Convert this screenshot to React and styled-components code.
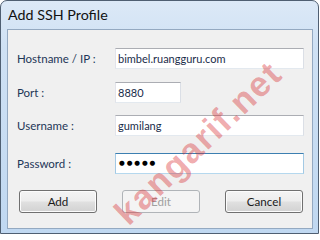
import React from "react";
import styled, { createGlobalStyle } from "styled-components";

const GlobalStyle = createGlobalStyle`
  html, body { margin: 0; padding: 0; background: #ffffff; }
  body { font-family: "Segoe UI", Lato, "Open Sans", sans-serif; }
  * { box-sizing: border-box; }
`;

const Window = styled.div`
  position: relative;
  width: 319px;
  height: 234px;
  border: 1px solid #4f5f72;
  border-radius: 7px 7px 0 0;
  background: linear-gradient(180deg, #dce9f7 0%, #cfe1f4 20%, #c0d8f1 100%);
  padding: 0 5px 4px 6px;
  display: flex;
  flex-direction: column;
  overflow: hidden;
`;

const TitleBar = styled.div`
  height: 28px;
  display: flex;
  align-items: center;
  padding: 0 0 2px 1px;
  font-size: 14.3px;
  color: #111;
`;

const Client = styled.div`
  flex: 1;
  border: 1px solid #94a9c1;
  background: #f0f0f0;
  padding: 18px 8px 0 9px;
  display: flex;
  flex-direction: column;
`;

const Row = styled.div`
  display: flex;
  align-items: center;
  margin-top: ${(p) => p.$gap || 0}px;
`;

const Label = styled.div`
  width: 98px;
  font-size: 11.5px;
  color: #1d3657;
`;

const TextBox = styled.div`
  height: 21px;
  width: ${(p) => p.$width || 189}px;
  background: #ffffff;
  border: 1px solid;
  border-color: ${(p) =>
    p.$focused
      ? "#3c7fb1 #a3c9e4 #b5d8ee #a3c9e4"
      : "#abadb3 #dbdfe6 #e3e9ef #e2e3ea"};
  padding: 0 2px;
  display: flex;
  align-items: center;
  font-size: 11px;
  color: #1a2c4a;
  white-space: nowrap;
  overflow: hidden;
`;

const Dots = styled.span`
  font-family: "DejaVu Sans", sans-serif;
  font-size: 6.6px;
  letter-spacing: 1.9px;
  padding-left: 1px;
  color: #000;
  line-height: 1;
`;

const ButtonRow = styled.div`
  display: flex;
  justify-content: space-between;
  margin: 16px 0 0 2px;
  padding-right: 1px;
`;

const Button = styled.div`
  width: 78px;
  height: 23px;
  border: 1px solid ${(p) => (p.$disabled ? "#b0b4b8" : "#707070")};
  border-radius: 3px;
  display: flex;
  align-items: center;
  justify-content: center;
  font-size: 11.6px;
  color: ${(p) => (p.$disabled ? "#a0a0a0" : "#1a1a1a")};
  background: ${(p) =>
    p.$disabled
      ? "#f4f4f4"
      : "linear-gradient(180deg, #f4f4f4 0%, #ededed 48%, #e0e0e0 52%, #d2d2d2 100%)"};
  box-shadow: inset 0 0 0 1px ${(p) => (p.$disabled ? "#f4f4f4" : "#fcfcfc")};
`;

const Watermark = styled.div`
  position: absolute;
  left: 197px;
  top: 142px;
  transform: translate(-50%, -50%) rotate(-44deg);
  font-family: "Liberation Sans", Arial, sans-serif;
  font-weight: bold;
  font-size: 35px;
  letter-spacing: 1.5px;
  color: rgba(215, 40, 45, 0.4);
  white-space: nowrap;
  pointer-events: none;
`;

export default function App() {
  return (
    <>
      <GlobalStyle />
      <Window>
        <TitleBar>Add SSH Profile</TitleBar>
        <Client>
          <Row>
            <Label>Hostname / IP :</Label>
            <TextBox>bimbel.ruangguru.com</TextBox>
          </Row>
          <Row $gap={13}>
            <Label>Port :</Label>
            <TextBox $width={66}>8880</TextBox>
          </Row>
          <Row $gap={12}>
            <Label>Username :</Label>
            <TextBox>gumilang</TextBox>
          </Row>
          <Row $gap={17}>
            <Label>Password :</Label>
            <TextBox $focused>
              <Dots>●●●●●</Dots>
            </TextBox>
          </Row>
          <ButtonRow>
            <Button>Add</Button>
            <Button $disabled>Edit</Button>
            <Button>Cancel</Button>
          </ButtonRow>
        </Client>
        <Watermark>kangarif.net</Watermark>
      </Window>
    </>
  );
}
